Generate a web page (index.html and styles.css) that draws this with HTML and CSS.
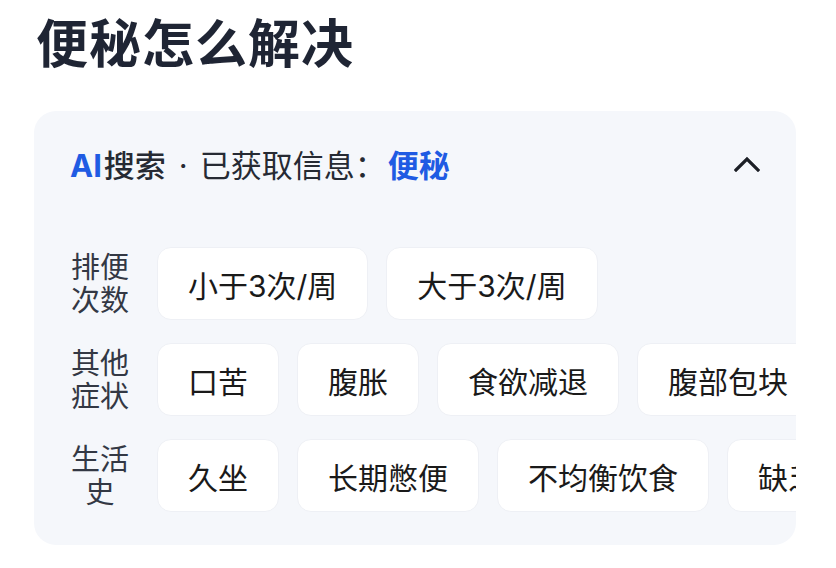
FILE: index.html
```html
<!DOCTYPE html>
<html lang="zh-CN">
<head>
    <meta charset="UTF-8">
    <meta name="viewport" content="width=device-width, initial-scale=1.0">
    <title>便秘怎么解决</title>
    <link rel="stylesheet" href="styles.css">
</head>
<body>
    <h1 class="title">便秘怎么解决</h1>

    <div class="card">
        <div class="card-header">
            <p class="source"><span class="ai">AI</span><span class="brand">搜索</span><span class="dot">·</span>已获取信息：<span class="keyword">便秘</span></p>
            <svg class="chevron" width="26" height="16" viewBox="0 0 26 16">
                <polyline points="2,14 13,3 24,14" fill="none" stroke="#1c1f26" stroke-width="3.2" stroke-linecap="square" stroke-linejoin="miter"/>
            </svg>
        </div>

        <div class="filter-row">
            <div class="label">排便<br>次数</div>
            <div class="chips">
                <span class="chip">小于3次/周</span>
                <span class="chip">大于3次/周</span>
            </div>
        </div>

        <div class="filter-row">
            <div class="label">其他<br>症状</div>
            <div class="chips">
                <span class="chip">口苦</span>
                <span class="chip">腹胀</span>
                <span class="chip">食欲减退</span>
                <span class="chip">腹部包块</span>
            </div>
        </div>

        <div class="filter-row">
            <div class="label">生活<br>史</div>
            <div class="chips">
                <span class="chip">久坐</span>
                <span class="chip">长期憋便</span>
                <span class="chip">不均衡饮食</span>
                <span class="chip">缺乏运动</span>
            </div>
        </div>
    </div>
</body>
</html>
```

FILE: styles.css
```css
* {
    box-sizing: border-box;
    margin: 0;
    padding: 0;
}

body {
    font-family: Inter, "Noto Sans CJK SC", sans-serif;
    background-color: #ffffff;
    padding: 14px 40px 0 34px;
    color: #1c1f26;
}

.title {
    font-size: 52px;
    font-weight: 700;
    line-height: 62px;
    color: #1f2534;
    padding-left: 2px;
    letter-spacing: 1px;
}

.card {
    margin-top: 35px;
    background-color: #f5f7fb;
    border-radius: 22px;
    padding: 30px 0 33px 36px;
    overflow: hidden;
}

.card-header {
    display: flex;
    align-items: center;
    justify-content: space-between;
    height: 44px;
    padding-right: 36px;
    margin-bottom: 62px;
}

.source {
    font-size: 31px;
    color: #262a33;
    white-space: nowrap;
}

.ai {
    color: #1f5be3;
    font-weight: 700;
    margin-right: 2px;
}

.brand {
    font-weight: 500;
}

.dot {
    margin: 0 12px 0 13px;
}

.keyword {
    color: #1f5be3;
    font-weight: 700;
    margin-left: 2px;
}

.chevron {
    display: block;
    margin-top: 2px;
}

.filter-row {
    display: flex;
    align-items: center;
    gap: 27px;
    height: 73px;
    margin-bottom: 23px;
}

.filter-row:last-child {
    margin-bottom: 0;
}

.label {
    width: 60px;
    flex-shrink: 0;
    font-size: 29px;
    line-height: 33px;
    color: #333844;
    text-align: center;
}

.chips {
    display: flex;
    gap: 18px;
    overflow: hidden;
    flex: 1;
    min-width: 0;
    height: 100%;
}

.chip {
    flex-shrink: 0;
    display: flex;
    align-items: center;
    height: 73px;
    padding: 0 30px;
    background-color: #ffffff;
    border: 1px solid #eef0f5;
    border-radius: 14px;
    font-size: 30px;
    color: #1a1a1a;
    white-space: nowrap;
}
```
